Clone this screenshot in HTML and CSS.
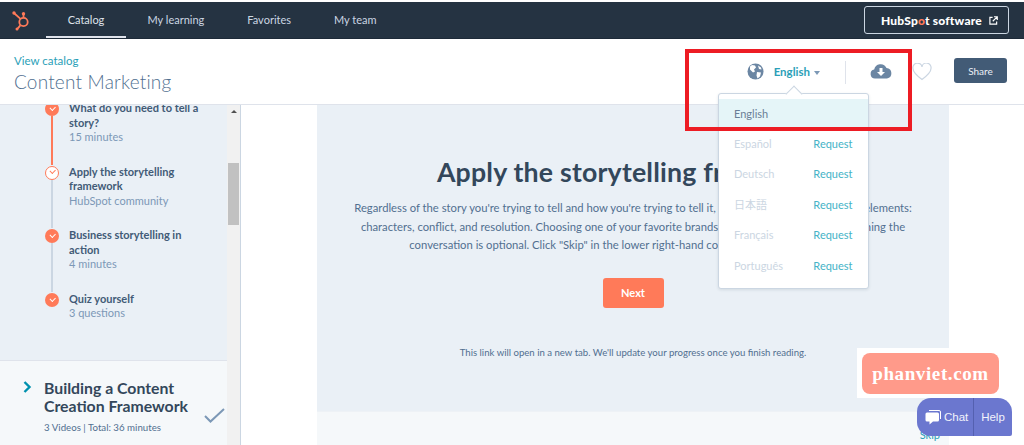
FILE: index.html
```html
<!DOCTYPE html>
<html lang="en">
  <head>
    <meta charset="UTF-8" />
    <meta name="viewport" content="width=device-width, initial-scale=1.0" />
    <title>Content Marketing</title>
    <link rel="stylesheet" href="styles.css">
  </head>
  <body>
    <nav class="topnav">
      <svg class="logo" width="20" height="24" viewBox="0 0 20 24">
        <g fill="none" stroke="#ff7a59" stroke-width="1.8">
          <circle cx="12.5" cy="14" r="4.2" />
          <path d="M12.5 9.5V6M3.5 5.5L9.5 10.8M9.3 17.4L6.6 20.6" />
        </g>
        <circle cx="12.5" cy="5.8" r="1.7" fill="#ff7a59" />
        <circle cx="3" cy="5" r="1.7" fill="#ff7a59" />
        <circle cx="6" cy="21" r="1.5" fill="#ff7a59" />
      </svg>
      <a class="tab active">Catalog</a>
      <a class="tab">My learning</a>
      <a class="tab">Favorites</a>
      <a class="tab">My team</a>
      <a class="software-btn">
        <span>HubSp<span class="sprocket">o</span>t software</span>
        <svg width="9" height="9" viewBox="0 0 10 10" fill="none" stroke="#fff" stroke-width="1.3">
          <path d="M4 1.5H1V9H8.5V6M5.5 .8H9.2V4.5M9 1L4.2 5.8" />
        </svg>
      </a>
    </nav>

    <header class="pagehead">
      <div class="titles">
        <a class="back">View catalog</a>
        <h1>Content Marketing</h1>
      </div>
      <div class="actions">
        <svg class="globe" width="17" height="17" viewBox="0 0 17 17">
          <circle cx="8.5" cy="8.5" r="8" fill="#6b86a3" />
          <path d="M5 2l3 .5 1 2-2 2 1 2-2 1-3-3 0-3zM10 9l4 .5-1 4-2.500 2-1-3zM11 2.500l3 2 .5 2-2.500-.5z" fill="#fff" />
        </svg>
        <span class="lang">English</span>
        <span class="caret"></span>
        <span class="divider"></span>
        <svg class="cloud" width="22" height="16" viewBox="0 0 22 16">
          <path d="M5 15.500a4.500 4.500 0 0 1-.8-8.900A6.500 6.500 0 0 1 16.500 5a5.300 5.300 0 0 1 .5 10.500z" fill="#6b86a3" />
          <path d="M9.500 5h3v4H15l-4 4-4-4h2.500z" fill="#fff" />
        </svg>
        <svg class="heart" width="20" height="18" viewBox="0 0 20 18">
          <path d="M10 16.500C4 12 1 9 1 5.500A4.300 4.300 0 0 1 10 3.800 4.300 4.300 0 0 1 19 5.500C19 9 16 12 10 16.500z" fill="#fff" stroke="#cbd6e2" stroke-width="1.200" />
        </svg>
        <button class="share">Share</button>
      </div>
    </header>

    <main class="layout">
      <aside class="sidebar">
        <section class="lessons">
          <div class="step">
            <div class="marker"><span class="dot"></span><span class="line done"></span></div>
            <div class="step-text">
              <h3>What do you need to tell a story?</h3>
              <p>15 minutes</p>
            </div>
          </div>
          <div class="step">
            <div class="marker"><span class="dot current"></span><span class="line"></span></div>
            <div class="step-text">
              <h3>Apply the storytelling framework</h3>
              <p>HubSpot community</p>
            </div>
          </div>
          <div class="step">
            <div class="marker"><span class="dot"></span><span class="line"></span></div>
            <div class="step-text">
              <h3>Business storytelling in action</h3>
              <p>4 minutes</p>
            </div>
          </div>
          <div class="step">
            <div class="marker"><span class="dot"></span></div>
            <div class="step-text">
              <h3>Quiz yourself</h3>
              <p>3 questions</p>
            </div>
          </div>
        </section>
        <section class="next-module">
          <svg class="chevron" width="9" height="12" viewBox="0 0 9 12" fill="none" stroke="#0091ae" stroke-width="2.400">
            <path d="M1.500 1l5 5-5 5" />
          </svg>
          <div class="module-text">
            <h2>Building a Content Creation Framework</h2>
            <p>3 Videos | Total: 36 minutes</p>
          </div>
          <svg class="tick" width="21" height="15" viewBox="0 0 21 15" fill="none" stroke="#7c98b6" stroke-width="2">
            <path d="M1 8l5.500 5.500L20 1" />
          </svg>
        </section>
      </aside>

      <div class="scrollbar">
        <span class="arrow"></span>
        <span class="thumb"></span>
      </div>

      <div class="stage">
        <article class="panel">
          <h2>Apply the storytelling framework</h2>
          <p>
            Regardless of the story you're trying to tell and how you're trying to tell it, start with the three key story elements:<br />
            characters, conflict, and resolution. Choosing one of your favorite brands, think of how it uses each. Joining the<br />
            conversation is optional. Click "Skip" in the lower right-hand corner to move on to the next.
          </p>
          <button class="next">Next</button>
          <small>This link will open in a new tab. We'll update your progress once you finish reading.</small>
        </article>
        <div class="panel-foot"><a>Skip</a></div>
      </div>
    </main>

    <div class="dropdown">
      <div class="row selected"><span>English</span></div>
      <div class="row"><span>Español</span><a>Request</a></div>
      <div class="row"><span>Deutsch</span><a>Request</a></div>
      <div class="row"><span class="cjk">日本語</span><a>Request</a></div>
      <div class="row"><span>Français</span><a>Request</a></div>
      <div class="row"><span>Português</span><a>Request</a></div>
    </div>

    <div class="highlight"></div>

    <div class="watermark"><span>phanviet.com</span></div>

    <div class="chat">
      <span class="chat-part">
        <svg width="16" height="15" viewBox="0 0 16 15">
          <path d="M4 .5h10a1.500 1.500 0 0 1 1.500 1.500v7" fill="none" stroke="#fff" />
          <path d="M2 2.500h10.500A1.500 1.500 0 0 1 14 4v6a1.500 1.500 0 0 1-1.500 1.500H8L4.500 14.500v-3H2A1.500 1.500 0 0 1 .5 10V4A1.500 1.500 0 0 1 2 2.500z" fill="#fff" />
        </svg>
        Chat
      </span>
      <span class="help-part">Help</span>
    </div>
  </body>
</html>
```

FILE: styles.css
```css
* {
  box-sizing: border-box;
}

html,
body {
  height: 445px;
  overflow: hidden;
}

body {
  margin: 0;
  padding-top: 2px;
  background: #fff;
  font-family: "Lato", sans-serif;
  color: #33475b;
  position: relative;
}

h1,
h2,
h3,
p {
  margin: 0;
}

/* top bar */
.topnav {
  height: 37px;
  background: #253342;
  display: flex;
  align-items: center;
  padding-left: 11px;
  border-bottom: 1px solid #1d2a38;
}

.logo {
  margin-right: 15px;
}

.tab {
  height: 36px;
  display: flex;
  align-items: center;
  justify-content: center;
  padding: 0 21.500px;
  color: #cbd6e2;
  font-size: 11px;
  border-bottom: 2px solid transparent;
}

.tab.active {
  width: 80px;
  padding: 0;
  border-bottom-color: #dfe3eb;
  color: #dfe3eb;
}

.software-btn {
  margin-left: auto;
  margin-right: 15px;
  width: 145px;
  height: 28px;
  display: flex;
  align-items: center;
  gap: 7px;
  padding-left: 16px;
  border: 1px solid #cbd6e2;
  border-radius: 3px;
  color: #fff;
  font-size: 12px;
  font-weight: 900;
  letter-spacing: 0.2px;
}

.sprocket {
  color: #ff7a59;
}

/* course header */
.pagehead {
  height: 66px;
  display: flex;
  justify-content: space-between;
  background: #fff;
  border-bottom: 1px solid #dfe3eb;
  padding: 14px 17px 0 14px;
}

.back {
  display: block;
  font-size: 11.5px;
  line-height: 15px;
  color: #2b9fb8;
}

.titles h1 {
  font-size: 19px;
  line-height: 26px;
  margin-top: 1px;
  font-weight: 300;
  letter-spacing: 0.2px;
  color: #516f90;
}

.actions {
  display: flex;
  align-items: flex-start;
}

.globe {
  margin: 10px 10px 0 0;
}

.lang {
  margin-top: 11px;
  font-size: 11.500px;
  font-weight: 700;
  line-height: 16px;
  color: #2b9fb8;
}

.caret {
  margin: 18px 25px 0 4px;
  border: 3.5px solid transparent;
  border-top: 4px solid #7c98b6;
  border-bottom: 0;
}

.divider {
  width: 1px;
  height: 23px;
  margin: 8px 24px 0 0;
  background: #dfe3eb;
}

.cloud {
  margin: 10px 20px 0 0;
}

.heart {
  margin: 10px 22px 0 0;
}

.share {
  width: 53px;
  height: 25px;
  margin-top: 5px;
  background: #425b76;
  color: #eaf0f6;
  border: 0;
  border-radius: 3px;
  font-family: inherit;
  font-size: 10px;
}

/* sidebar + content */
.layout {
  height: 340px;
  display: flex;
}

.sidebar {
  width: 227px;
  display: flex;
  flex-direction: column;
  overflow: hidden;
}

.lessons {
  height: 256px;
  flex: none;
  background: #eaf0f6;
  border-bottom: 1px solid #dfe3eb;
  padding-left: 45px;
  overflow: hidden;
}

.step {
  display: flex;
  gap: 10px;
}

.step:first-child {
  margin-top: -4px;
}

.marker {
  width: 14px;
  flex: none;
  display: flex;
  flex-direction: column;
  align-items: center;
}

.dot {
  width: 14px;
  height: 14px;
  flex: none;
  margin-top: 1px;
  border-radius: 50%;
  background: #ff7a59;
  position: relative;
}

.dot::after {
  content: "";
  position: absolute;
  left: 5px;
  top: 4px;
  width: 4px;
  height: 2.500px;
  border-left: 1px solid #fff;
  border-bottom: 1px solid #fff;
  transform: rotate(-45deg);
}

.dot.current {
  background: #fff;
  border: 1.500px solid #ff7a59;
}

.dot.current::after {
  left: 3.500px;
  top: 2.500px;
  border-color: #ff7a59;
}

.line {
  width: 2px;
  flex: 1;
  background: #cbd6e2;
}

.line.done {
  background: #ff7a59;
}

.step-text {
  width: 140px;
  padding-bottom: 20px;
  font-size: 11px;
  line-height: 14.500px;
}

.step-text h3 {
  font-size: 11px;
  font-weight: 700;
  color: #425b76;
}

.step-text p {
  color: #7c98b6;
}

.next-module {
  flex: 1;
  display: flex;
  background: #f5f8fa;
  padding: 18px 0 0 23px;
  position: relative;
}

.chevron {
  margin-top: 2px;
}

.module-text {
  width: 160px;
  margin-left: 12px;
}

.module-text h2 {
  font-size: 15.800px;
  line-height: 18px;
  font-weight: 700;
  color: #33475b;
}

.module-text p {
  margin-top: 5px;
  font-size: 9.700px;
  line-height: 14px;
  color: #516f90;
}

.tick {
  margin: 29px 0 0 0;
}

.scrollbar {
  width: 14px;
  flex: none;
  background: #f1f1f1;
  border-right: 1px solid #cbd6e2;
  display: flex;
  flex-direction: column;
  align-items: center;
}

.arrow {
  margin-top: 5px;
  border: 3px solid transparent;
  border-bottom: 3px solid #505050;
  border-top: 0;
}

.thumb {
  width: 11px;
  height: 62px;
  margin-top: 50px;
  background: #c1c1c1;
}

.stage {
  flex: 1;
  padding: 0 75px 0 76px;
  display: flex;
  flex-direction: column;
}

.panel {
  height: 306px;
  flex: none;
  background: #eaf0f6;
  display: flex;
  flex-direction: column;
  align-items: center;
  text-align: center;
  padding-top: 51px;
}

.panel h2 {
  padding-left: 6px;
  font-size: 26.700px;
  line-height: 32px;
  font-weight: 700;
  letter-spacing: 0.2px;
  color: #33475b;
  white-space: nowrap;
}

.panel p {
  margin-top: 11px;
  font-size: 11.250px;
  line-height: 18.500px;
  color: #516f90;
  white-space: nowrap;
}

.next {
  width: 61px;
  height: 30px;
  margin-top: 23px;
  background: #ff7a59;
  color: #fff;
  border: 0;
  border-radius: 3px;
  font-family: inherit;
  font-size: 11px;
  font-weight: 700;
}

.panel small {
  margin-top: 38px;
  font-size: 9.600px;
  line-height: 13px;
  color: #516f90;
}

.panel-foot {
  flex: 1;
  background: #f5f8fa;
  border-top: 1px solid #eef2f6;
  display: flex;
  justify-content: flex-end;
  align-items: flex-end;
  padding: 0 9px 3px 0;
}

.panel-foot a {
  font-size: 11px;
  line-height: 14px;
  color: #2b9fb8;
}

/* language menu */
.dropdown {
  position: absolute;
  left: 718px;
  top: 93px;
  width: 151px;
  height: 196px;
  padding-top: 5px;
  background: #fff;
  border: 1px solid #cbd6e2;
  border-radius: 3px;
  box-shadow: 0 1px 3px rgba(45, 62, 80, 0.12);
}

.dropdown::before {
  content: "";
  position: absolute;
  left: 69px;
  top: -6px;
  width: 11px;
  height: 11px;
  background: #fff;
  border-left: 1px solid #cbd6e2;
  border-top: 1px solid #cbd6e2;
  transform: rotate(45deg);
}

.row {
  height: 30.400px;
  display: flex;
  align-items: center;
  justify-content: space-between;
  padding: 0 15.500px 2px 15px;
  font-size: 11px;
  color: #cbd6e2;
  position: relative;
}

.row.selected {
  background: #e5f5f8;
  color: #6a7f96;
}

.row a {
  color: #45b3c7;
}

.cjk {
  font-family: "Noto Sans CJK JP", sans-serif;
}

.highlight {
  position: absolute;
  left: 685px;
  top: 49px;
  width: 227px;
  height: 82px;
  border: 4px solid #ed1c24;
}

.watermark {
  position: absolute;
  left: 857px;
  top: 348px;
  width: 148px;
  height: 50px;
  padding: 5px 6px 4px 5px;
  background: #fff;
}

.watermark span {
  display: flex;
  align-items: center;
  justify-content: center;
  height: 100%;
  background: #ff9a8a;
  border-radius: 8px;
  color: #fff;
  font-family: "Liberation Serif", serif;
  font-size: 19px;
  font-weight: 700;
  letter-spacing: 0.600px;
}

.chat {
  position: absolute;
  left: 917px;
  top: 398px;
  width: 95px;
  height: 38px;
  display: flex;
  background: #6b77cf;
  border-radius: 14px 14px 2px 14px;
  color: #f2f3fb;
  font-family: "Liberation Sans", sans-serif;
  font-size: 11.500px;
}

.chat-part {
  width: 57px;
  display: flex;
  align-items: center;
  gap: 3px;
  padding-left: 8px;
  border-right: 1px solid #5460b0;
}

.help-part {
  flex: 1;
  display: flex;
  align-items: center;
  justify-content: center;
}
```
